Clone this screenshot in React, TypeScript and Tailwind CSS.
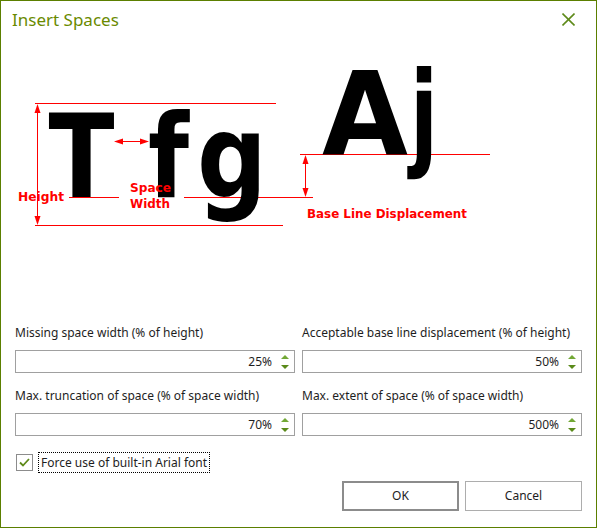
import React from "react";

const RED = "#ff0000";

function Spinner() {
  return (
    <div className="flex flex-col items-center justify-center gap-[6px] w-[8px] ml-[9px] mr-[5px]">
      <svg width="8" height="4" viewBox="0 0 8 4">
        <polygon points="4,0 8,4 0,4" fill="#72a836" />
      </svg>
      <svg width="8" height="4" viewBox="0 0 8 4">
        <polygon points="0,0 8,0 4,4" fill="#5a8a1a" />
      </svg>
    </div>
  );
}

function Field({ label, value }: { label: string; value: string }) {
  return (
    <div className="flex flex-col">
      <div className="h-[18px] leading-[18px] text-[12px] text-[#1e1e1e] whitespace-nowrap">{label}</div>
      <div className="mt-[8px] h-[23px] border border-[#a0a0a0] flex items-center justify-end">
        <span className="text-[12px] leading-[16px] text-[#1e1e1e]">{value}</span>
        <Spinner />
      </div>
    </div>
  );
}

const bigCls = "font-['DejaVu_Sans',sans-serif] font-bold text-[115.6px]";
const labCls = "font-['DejaVu_Sans',sans-serif] font-bold text-[13px]";

function Diagram() {
  return (
    <svg width="595" height="284" viewBox="1 40 595 284" className="block">
      {/* lines */}
      <line x1="35" y1="103.5" x2="276" y2="103.5" stroke={RED} strokeWidth="1" />
      <line x1="35" y1="225.5" x2="283" y2="225.5" stroke={RED} strokeWidth="1" />
      <line x1="69" y1="197.5" x2="119" y2="197.5" stroke={RED} strokeWidth="1" />
      <line x1="184" y1="197.5" x2="313" y2="197.5" stroke={RED} strokeWidth="1" />
      <line x1="300" y1="154.5" x2="490" y2="154.5" stroke={RED} strokeWidth="1" />

      {/* height arrow */}
      <line x1="37.5" y1="108" x2="37.5" y2="221" stroke={RED} strokeWidth="1" />
      <polygon points="37.5,104 40.5,113 34.5,113" fill={RED} />
      <polygon points="37.5,225 40.5,216 34.5,216" fill={RED} />

      {/* space arrow */}
      <line x1="118" y1="141.5" x2="145" y2="141.5" stroke={RED} strokeWidth="1" />
      <polygon points="114,141.5 123,138.5 123,144.5" fill={RED} />
      <polygon points="149,141.5 140,138.5 140,144.5" fill={RED} />

      {/* baseline arrow */}
      <line x1="305.5" y1="159" x2="305.5" y2="193" stroke={RED} strokeWidth="1" />
      <polygon points="305.5,155 308.5,164 302.5,164" fill={RED} />
      <polygon points="305.5,197 308.5,188 302.5,188" fill={RED} />

      {/* glyphs */}
      <text x="48.5" y="197" className={bigCls} textLength="66" lengthAdjust="spacingAndGlyphs" fill="#000">T</text>
      <text x="148" y="197" className={bigCls} textLength="41" lengthAdjust="spacingAndGlyphs" fill="#000">f</text>
      <text x="197" y="197" className={bigCls} textLength="70" lengthAdjust="spacingAndGlyphs" fill="#000">g</text>
      <text x="322" y="154" className={bigCls} textLength="86" lengthAdjust="spacingAndGlyphs" fill="#000">A</text>
      <text x="410" y="154" className={bigCls} textLength="28" lengthAdjust="spacingAndGlyphs" fill="#000">j</text>

      {/* labels */}
      <text x="18" y="201" className={labCls} textLength="46" lengthAdjust="spacingAndGlyphs" fill={RED}>Height</text>
      <text x="130" y="192" className={labCls} textLength="41" lengthAdjust="spacingAndGlyphs" fill={RED}>Space</text>
      <text x="130" y="208" className={labCls} textLength="40" lengthAdjust="spacingAndGlyphs" fill={RED}>Width</text>
      <text x="307" y="218" className={labCls} textLength="160" lengthAdjust="spacingAndGlyphs" fill={RED}>Base Line Displacement</text>
    </svg>
  );
}

export default function App() {
  return (
    <div className="w-[597px] h-[528px] border border-[#5b7f00] bg-white flex flex-col font-['Noto_Sans','Open_Sans',sans-serif]">
      {/* title bar */}
      <div className="h-[39px] flex items-start justify-between">
        <span className="ml-[11px] mt-[7px] text-[17px] leading-[24px] text-[#6a8a00]">Insert Spaces</span>
        <svg width="13" height="13" viewBox="0 0 13 13" className="mt-[12px] mr-[21px]">
          <line x1="0.5" y1="0.5" x2="12.5" y2="12.5" stroke="#5e8a1a" strokeWidth="1.6" />
          <line x1="12.5" y1="0.5" x2="0.5" y2="12.5" stroke="#5e8a1a" strokeWidth="1.6" />
        </svg>
      </div>

      <Diagram />

      {/* form */}
      <div className="px-[14px] grid grid-cols-2 gap-x-[7px] gap-y-[14px]">
        <Field label="Missing space width (% of height)" value="25%" />
        <Field label="Acceptable base line displacement (% of height)" value="50%" />
        <Field label="Max. truncation of space (% of space width)" value="70%" />
        <Field label="Max. extent of space (% of space width)" value="500%" />
      </div>

      {/* checkbox */}
      <div className="mt-[16px] px-[14px] flex items-center h-[21px]">
        <div className="ml-[1px] w-[17px] h-[17px] border border-[#8c8c8c] flex items-center justify-center">
          <svg width="11" height="9" viewBox="0 0 11 9">
            <polyline points="1,4.5 4,7.5 10,1" fill="none" stroke="#5e8a1a" strokeWidth="1.8" />
          </svg>
        </div>
        <div className="ml-[5px] h-[21px] border border-dotted border-black px-[2px] flex items-center text-[12px] leading-[16px] text-[#1e1e1e]">
          Force use of built-in Arial font
        </div>
      </div>

      {/* buttons */}
      <div className="mt-[8px] px-[14px] flex justify-end gap-[6px]">
        <button className="w-[117px] h-[30px] border-2 border-[#8c8c8c] bg-white text-[12px] text-[#1e1e1e]">OK</button>
        <button className="w-[117px] h-[30px] border border-[#adadad] bg-white text-[12px] text-[#1e1e1e]">Cancel</button>
      </div>
    </div>
  );
}
